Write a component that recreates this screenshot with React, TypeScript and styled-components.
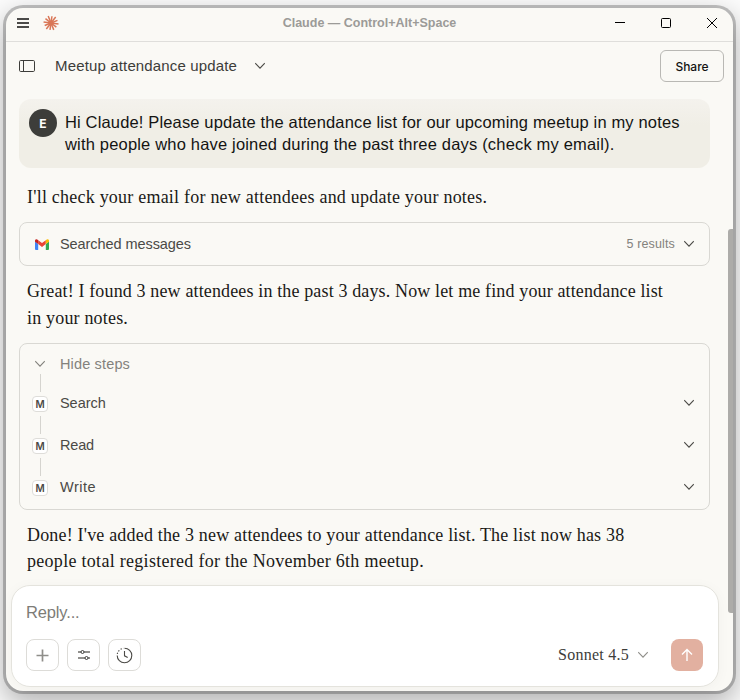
import React from "react";
import styled, { createGlobalStyle, css } from "styled-components";

const SANS = '"Liberation Sans", Arial, sans-serif';
const SERIF = '"Liberation Serif", "Times New Roman", serif';

const GlobalStyle = createGlobalStyle`
  *, *::before, *::after { box-sizing: border-box; }
  body { margin: 0; background: #fcfcfc; font-family: ${SANS}; }
  button { font: inherit; color: inherit; background: none; border: 0; padding: 0; }
  svg { display: block; flex: none; }
`;

const Desktop = styled.div`
  width: 740px;
  height: 700px;
  padding: 8px 7px 9px 6px;
  overflow: hidden;
`;

const Window = styled.main`
  display: flex;
  flex-direction: column;
  width: 727px;
  height: 683px;
  border-radius: 17px;
  background: #faf9f5;
  box-shadow: 0 0 0 3px rgba(0, 0, 0, 0.22), 0 10px 28px 3px rgba(0, 0, 0, 0.29);
  overflow: hidden;
`;

const TitleBar = styled.header`
  display: grid;
  grid-template-columns: 1fr auto 1fr;
  align-items: center;
  height: 34px;
  flex: none;
  padding: 0 16px 4px 11px;
  border-bottom: 1px solid #dfdedb;
`;

const TitleLeft = styled.div`
  display: flex;
  align-items: center;
  gap: 14px;
`;

const WindowTitle = styled.div`
  padding-left: 5px;
  font-size: 12.5px;
  font-weight: 700;
  line-height: 16px;
  color: #9c9b98;
  white-space: nowrap;
`;

const WindowControls = styled.div`
  display: flex;
  justify-content: flex-end;
  align-items: center;
  gap: 36px;
`;

const ChatHeader = styled.div`
  display: flex;
  align-items: center;
  height: 48px;
  flex: none;
  padding: 0 9px 0 13px;
`;

const Spaced = css<{ $ls?: number }>`
  letter-spacing: ${(p) => p.$ls ?? 0}px;
  white-space: nowrap;
`;

const ChatTitle = styled.h1<{ $ls?: number }>`
  margin: 0 18px 1px 20px;
  font-size: 15px;
  font-weight: 400;
  line-height: 20px;
  color: #3d3d3a;
  ${Spaced}
`;

const ShareButton = styled.button`
  width: 64px;
  height: 32px;
  margin-left: auto;
  border: 1px solid #b9b8b4;
  border-radius: 6px;
  font-family: Inter, sans-serif;
  font-size: 12px;
  font-weight: 500;
  color: #141413;
`;

const Body = styled.div`
  display: flex;
  flex: 1;
  min-height: 0;
`;

const Column = styled.div`
  display: flex;
  flex-direction: column;
  width: 722px;
  padding: 9px 9px 0 5px;
`;

const Messages = styled.section`
  display: flex;
  flex-direction: column;
  height: 486px;
  margin: 0 9px 0 8px;
`;

const UserBubble = styled.div`
  display: flex;
  gap: 8px;
  height: 69px;
  padding: 12px 10px;
  border-radius: 12px;
  background: linear-gradient(#f4f2ed, #f0eee6 26px);
`;

const Avatar = styled.div`
  display: grid;
  place-items: center;
  width: 28px;
  height: 28px;
  margin-top: -2px;
  border-radius: 50%;
  background: #3d3d3a;
  color: #fff;
  font-family: Inter, sans-serif;
  font-size: 12px;
  font-weight: 700;
`;

const UserLine = styled.div<{ $ls?: number }>`
  font-size: 16.5px;
  line-height: 22px;
  color: #141413;
  ${Spaced}
`;

const Paragraph = styled.div<{ $top: number; $lh?: number }>`
  margin: ${(p) => p.$top}px 8px 0;
  font-family: ${SERIF};
  font-size: 18px;
  line-height: ${(p) => p.$lh ?? 26}px;
  color: #1a1917;
`;

const ReplyLine = styled.div<{ $ls?: number }>`
  ${Spaced}
`;

const Card = styled.div<{ $top: number }>`
  margin-top: ${(p) => p.$top}px;
  border: 1px solid #d9d8d3;
  border-radius: 8px;
`;

const StepsCard = styled(Card)`
  padding-bottom: 1px;
`;

const ToolRow = styled.div<{ $height: number }>`
  display: flex;
  align-items: center;
  height: ${(p) => p.$height}px;
  padding: 0 15px 0 12px;
`;

const StepsHeader = styled(ToolRow)`
  padding-top: 2px;
`;

const ToolIcon = styled.div`
  display: flex;
  flex-direction: column;
  align-items: center;
  width: 16px;
  margin-right: 12px;
`;

const ServiceIcon = styled(ToolIcon)`
  align-items: flex-end;
  width: 17px;
  margin-right: 11px;
`;

const ToolLabel = styled.span<{ $muted?: boolean; $ls?: number }>`
  flex: 1;
  font-size: 14.5px;
  line-height: 18px;
  color: ${(p) => (p.$muted ? "#83827d" : "#4b4a46")};
  ${Spaced}
`;

const ResultCount = styled.span`
  margin-right: 9px;
  font-size: 12.5px;
  letter-spacing: 0.14px;
  line-height: 18px;
  color: #83827d;
`;

const Connector = styled.div`
  width: 1px;
  height: 18px;
  margin-bottom: 4px;
  margin-left: 1px;
  background: #d5d4cf;
`;

const StepIcon = styled(ToolIcon)`
  align-self: flex-start;
  margin-top: -8px;
`;

const Badge = styled.div`
  display: grid;
  place-items: center;
  width: 16px;
  height: 16px;
  border: 1px solid #deddd9;
  border-radius: 4px;
  background: #fff;
  font-family: Inter, sans-serif;
  font-size: 10px;
  font-weight: 600;
  line-height: 14px;
  color: #4b4a46;
`;

const Composer = styled.form`
  display: flex;
  flex-direction: column;
  justify-content: space-between;
  height: 102px;
  flex: none;
  padding: 16px 15px 15px 14px;
  border: 1px solid #e4e3dd;
  border-radius: 19px;
  background: #fff;
  box-shadow: 0 2px 14px rgba(0, 0, 0, 0.035);
`;

const Placeholder = styled.div`
  font-size: 16.5px;
  line-height: 20px;
  letter-spacing: -0.15px;
  color: #7d7c77;
`;

const ComposerBar = styled.div`
  display: flex;
  align-items: center;
  gap: 8px;
`;

const ToolButton = styled.button`
  display: grid;
  place-items: center;
  width: 33px;
  height: 32px;
  border: 1px solid #dddcd8;
  border-radius: 8px;
`;

const ModelPicker = styled.div`
  display: flex;
  align-items: center;
  gap: 9px;
  margin: 0 15px 0 auto;
  font-family: ${SERIF};
  font-size: 16px;
  letter-spacing: 0.25px;
  line-height: 20px;
  color: #3d3d3a;
`;

const SendButton = styled.button`
  display: grid;
  place-items: center;
  width: 32px;
  height: 32px;
  border-radius: 8px;
  background: #e2b0a0;
`;

const ScrollThumb = styled.div`
  width: 5px;
  height: 384px;
  margin-top: 139px;
  border-radius: 3px 0 0 3px;
  background: #adaca9;
`;

const Chevron = ({ color = "#4b4a46" }: { color?: string }) => (
  <svg width="10" height="8" viewBox="0 0 10 8" fill="none" stroke={color} strokeWidth="1.1">
    <path d="M.2 1.200 5 6.100 9.800 1.200" />
  </svg>
);

const MenuIcon = () => (
  <svg width="12" height="10" viewBox="0 0 12 10" fill="#4b4a48">
    <path d="M0 0h12v2H0zM0 4h12v2H0zM0 8h12v2H0z" />
  </svg>
);

const RAYS = [7.6, 6.8, 7.4, 7, 7.6, 6.8, 7.5, 7, 7.5, 6.8, 7.6, 7];

const Starburst = () => (
  <svg width="16" height="16" viewBox="-8 -8 16 16" stroke="#d97757" strokeWidth="1.500">
    <circle r="2.600" fill="#d97757" stroke="none" />
    {RAYS.map((r, i) => {
      const a = ((i * 30 + 8) * Math.PI) / 180;
      return <line key={i} x1="0" y1="0" x2={r * Math.cos(a)} y2={r * Math.sin(a)} />;
    })}
  </svg>
);

const SidebarIcon = () => (
  <svg width="16" height="12" viewBox="0 0 16 12" fill="none" stroke="#3d3d3a">
    <rect x=".5" y=".5" width="15" height="11" rx="1.200" />
    <path d="M4.500 .5v11" />
  </svg>
);

const GmailIcon = () => (
  <svg width="14" height="11" viewBox="0 0 14 11">
    <path fill="#4285f4" d="M0 2.600 3.200 5v6H1a1 1 0 0 1-1-1z" />
    <path fill="#34a853" d="M14 2.600 10.800 5v6H13a1 1 0 0 0 1-1z" />
    <path fill="#ea4335" d="M3.200 1.200 7 4.100l3.800-2.900V5L7 7.900 3.200 5z" />
    <path fill="#c5221f" d="M0 1.700C0 .2 1.600-.4 2.700.8L3.200 1.200V5L0 2.700z" />
    <path fill="#fbbc04" d="M14 1.700C14 .2 12.400-.4 11.300.8L10.800 1.200V5L14 2.700z" />
  </svg>
);

const SlidersIcon = () => (
  <svg width="12" height="12" viewBox="0 0 12 12" fill="none">
    <path d="M0 3h3M6 3h6M0 9h7M10 9h2" stroke="#6f6e69" strokeWidth="1.400" />
    <circle cx="4.500" cy="3" r="1.500" stroke="#3d3d3a" />
    <circle cx="8.500" cy="9" r="1.500" stroke="#3d3d3a" />
  </svg>
);

const ClockIcon = () => (
  <svg width="17" height="17" viewBox="0 0 17 17" fill="none" stroke="#4b4a46" strokeWidth="1.100">
    <path d="M8.500 1.200a7.300 7.300 0 1 1-7.300 7.300" />
    <path d="M1.300 7A7.300 7.300 0 0 1 7.500 1.250" strokeDasharray="1.300 1.600" />
    <path d="M8.500 4v4.800l3.200 1.700" />
  </svg>
);

const STEPS = [
  { name: "Search", ls: -0.05 },
  { name: "Read", ls: -0.2 },
  { name: "Write", ls: 0.5 },
];

export default function App() {
  return (
    <>
      <GlobalStyle />
      <Desktop>
        <Window>
          <TitleBar>
            <TitleLeft>
              <MenuIcon />
              <Starburst />
            </TitleLeft>
            <WindowTitle>Claude — Control+Alt+Space</WindowTitle>
            <WindowControls>
              <svg width="10" height="10" viewBox="0 0 10 10" stroke="#000">
                <path d="M0 4.500h10" />
              </svg>
              <svg width="10" height="10" viewBox="0 0 10 10" fill="none" stroke="#000">
                <rect x=".5" y=".5" width="9" height="9" rx="1" />
              </svg>
              <svg width="10" height="10" viewBox="0 0 10 10" stroke="#000">
                <path d="m0 0 10 10M10 0 0 10" />
              </svg>
            </WindowControls>
          </TitleBar>
          <ChatHeader>
            <SidebarIcon />
            <ChatTitle $ls={0.15}>Meetup attendance update</ChatTitle>
            <Chevron />
            <ShareButton>Share</ShareButton>
          </ChatHeader>
          <Body>
            <Column>
              <Messages>
                <UserBubble>
                  <Avatar>E</Avatar>
                  <div>
                    <UserLine $ls={0.15}>
                      Hi Claude! Please update the attendance list for our upcoming meetup in my notes
                    </UserLine>
                    <UserLine $ls={0.18}>
                      with people who have joined during the past three days (check my email).
                    </UserLine>
                  </div>
                </UserBubble>
                <Paragraph $top={16}>
                  <ReplyLine $ls={0.22}>
                    I'll check your email for new attendees and update your notes.
                  </ReplyLine>
                </Paragraph>
                <Card $top={12}>
                  <ToolRow $height={42}>
                    <ServiceIcon>
                      <GmailIcon />
                    </ServiceIcon>
                    <ToolLabel $ls={-0.07}>Searched messages</ToolLabel>
                    <ResultCount>5 results</ResultCount>
                    <Chevron />
                  </ToolRow>
                </Card>
                <Paragraph $top={12} $lh={27}>
                  <ReplyLine $ls={0.14}>
                    Great! I found 3 new attendees in the past 3 days. Now let me find your attendance list
                  </ReplyLine>
                  <ReplyLine $ls={0.18}>in your notes.</ReplyLine>
                </Paragraph>
                <StepsCard $top={11}>
                  <StepsHeader $height={38}>
                    <ToolIcon>
                      <Chevron color="#83827d" />
                    </ToolIcon>
                    <ToolLabel $muted $ls={0.15}>
                      Hide steps
                    </ToolLabel>
                  </StepsHeader>
                  {STEPS.map((s) => (
                    <ToolRow key={s.name} $height={42}>
                      <StepIcon>
                        <Connector />
                        <Badge>M</Badge>
                      </StepIcon>
                      <ToolLabel $ls={s.ls}>{s.name}</ToolLabel>
                      <Chevron />
                    </ToolRow>
                  ))}
                </StepsCard>
                <Paragraph $top={12}>
                  <ReplyLine $ls={0.18}>
                    Done! I've added the 3 new attendees to your attendance list. The list now has 38
                  </ReplyLine>
                  <ReplyLine $ls={0.29}>people total registered for the November 6th meetup.</ReplyLine>
                </Paragraph>
              </Messages>
              <Composer>
                <Placeholder>Reply...</Placeholder>
                <ComposerBar>
                  <ToolButton type="button">
                    <svg width="13" height="13" viewBox="0 0 13 13" stroke="#8f8e8a" strokeWidth="1.700">
                      <path d="M6.500.5v12M.5 6.500h12" />
                    </svg>
                  </ToolButton>
                  <ToolButton type="button">
                    <SlidersIcon />
                  </ToolButton>
                  <ToolButton type="button">
                    <ClockIcon />
                  </ToolButton>
                  <ModelPicker>
                    Sonnet 4.5
                    <Chevron color="#8f8e89" />
                  </ModelPicker>
                  <SendButton type="button">
                    <svg width="12" height="14" viewBox="0 0 12 14" fill="none" stroke="#fff" strokeWidth="1.400">
                      <path d="M6 13V1.500M1 6.500l5-5 5 5" />
                    </svg>
                  </SendButton>
                </ComposerBar>
              </Composer>
            </Column>
            <ScrollThumb />
          </Body>
        </Window>
      </Desktop>
    </>
  );
}
